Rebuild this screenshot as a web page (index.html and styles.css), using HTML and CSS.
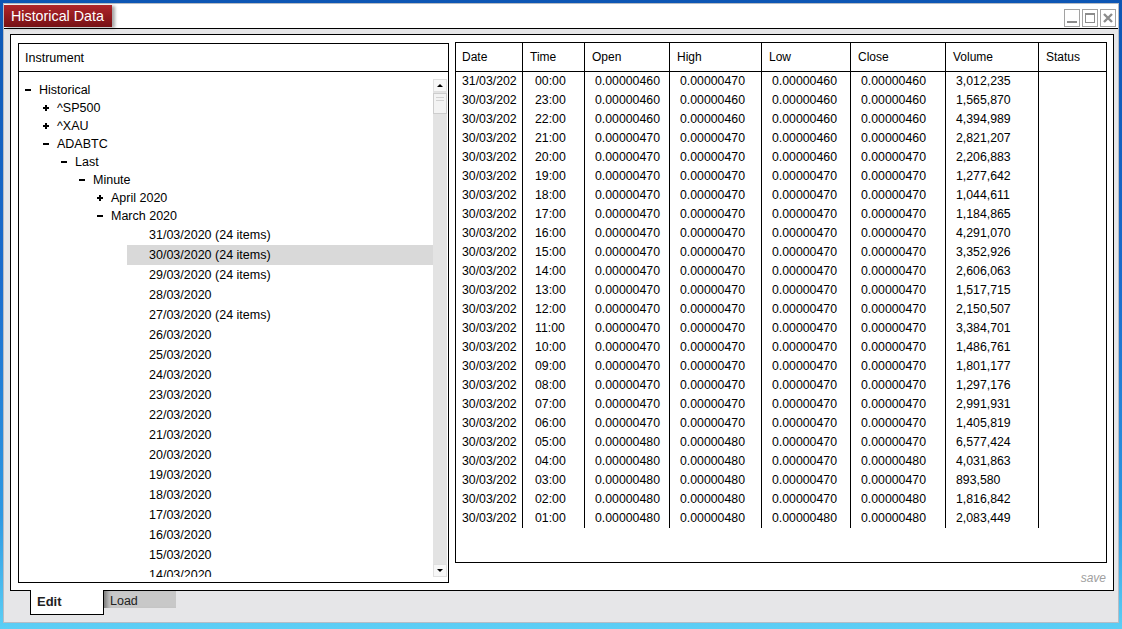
FILE: index.html
```html
<!DOCTYPE html>
<html lang="en">
<head>
    <meta charset="UTF-8">
    <title>Historical Data</title>
    <link rel="stylesheet" href="styles.css">
</head>
<body>
<div class="window">
    <div class="titlebar">
        <div class="title-tab">Historical Data</div>
        <div class="win-buttons">
            <span class="win-btn"><svg width="14" height="16" viewBox="0 0 14 16"><rect x="2" y="11" width="10" height="2" fill="#8c8c8c"/></svg></span>
            <span class="win-btn"><svg width="14" height="16" viewBox="0 0 14 16"><rect x="2.5" y="3.5" width="9" height="9" fill="none" stroke="#8c8c8c"/><rect x="2" y="3" width="10" height="2" fill="#8c8c8c"/></svg></span>
            <span class="win-btn"><svg width="14" height="16" viewBox="0 0 14 16"><path d="M3 4 L11 12 M11 4 L3 12" stroke="#8c8c8c" stroke-width="2.4"/></svg></span>
        </div>
    </div>
    <div class="window-body">
        <div class="panel">
            <div class="instrument">
                <div class="instrument-head">Instrument</div>
                <div class="instrument-body">
                    <div class="tree-view">
                        <ul class="tree">
                            <li><div class="node"><i class="toggle minus"></i>Historical</div>
                                <ul>
                                    <li><div class="node"><i class="toggle plus"></i>^SP500</div></li>
                                    <li><div class="node"><i class="toggle plus"></i>^XAU</div></li>
                                    <li><div class="node"><i class="toggle minus"></i>ADABTC</div>
                                        <ul>
                                            <li><div class="node"><i class="toggle minus"></i>Last</div>
                                                <ul>
                                                    <li><div class="node"><i class="toggle minus"></i>Minute</div>
                                                        <ul>
                                                            <li><div class="node"><i class="toggle plus"></i>April 2020</div></li>
                                                            <li><div class="node"><i class="toggle minus"></i>March 2020</div>
                                                                <ul class="days">
                                                                    <li class="leaf">31/03/2020 (24 items)</li>
                                                                    <li class="leaf selected">30/03/2020 (24 items)</li>
                                                                    <li class="leaf">29/03/2020 (24 items)</li>
                                                                    <li class="leaf">28/03/2020</li>
                                                                    <li class="leaf">27/03/2020 (24 items)</li>
                                                                    <li class="leaf">26/03/2020</li>
                                                                    <li class="leaf">25/03/2020</li>
                                                                    <li class="leaf">24/03/2020</li>
                                                                    <li class="leaf">23/03/2020</li>
                                                                    <li class="leaf">22/03/2020</li>
                                                                    <li class="leaf">21/03/2020</li>
                                                                    <li class="leaf">20/03/2020</li>
                                                                    <li class="leaf">19/03/2020</li>
                                                                    <li class="leaf">18/03/2020</li>
                                                                    <li class="leaf">17/03/2020</li>
                                                                    <li class="leaf">16/03/2020</li>
                                                                    <li class="leaf">15/03/2020</li>
                                                                    <li class="leaf">14/03/2020</li>
                                                                </ul>
                                                            </li>
                                                        </ul>
                                                    </li>
                                                </ul>
                                            </li>
                                        </ul>
                                    </li>
                                </ul>
                            </li>
                        </ul>
                    </div>
                    <div class="scrollbar">
                        <div class="sb-btn sb-up"></div>
                        <div class="sb-thumb"></div>
                        <div class="sb-track"></div>
                        <div class="sb-btn sb-down"></div>
                    </div>
                </div>
            </div>
            <div class="data-side">
                <div class="data-table">
                    <div class="grid">
                        <div class="tr"><div class="th">Date</div><div class="th">Time</div><div class="th">Open</div><div class="th">High</div><div class="th">Low</div><div class="th">Close</div><div class="th">Volume</div><div class="th">Status</div></div>
                        <div class="tr"><div class="td">31/03/2020</div><div class="td time">00:00</div><div class="td">0.00000460</div><div class="td">0.00000470</div><div class="td">0.00000460</div><div class="td">0.00000460</div><div class="td">3,012,235</div><div class="td"></div></div>
                        <div class="tr"><div class="td">30/03/2020</div><div class="td time">23:00</div><div class="td">0.00000460</div><div class="td">0.00000460</div><div class="td">0.00000460</div><div class="td">0.00000460</div><div class="td">1,565,870</div><div class="td"></div></div>
                        <div class="tr"><div class="td">30/03/2020</div><div class="td time">22:00</div><div class="td">0.00000460</div><div class="td">0.00000460</div><div class="td">0.00000460</div><div class="td">0.00000460</div><div class="td">4,394,989</div><div class="td"></div></div>
                        <div class="tr"><div class="td">30/03/2020</div><div class="td time">21:00</div><div class="td">0.00000470</div><div class="td">0.00000470</div><div class="td">0.00000460</div><div class="td">0.00000460</div><div class="td">2,821,207</div><div class="td"></div></div>
                        <div class="tr"><div class="td">30/03/2020</div><div class="td time">20:00</div><div class="td">0.00000470</div><div class="td">0.00000470</div><div class="td">0.00000460</div><div class="td">0.00000470</div><div class="td">2,206,883</div><div class="td"></div></div>
                        <div class="tr"><div class="td">30/03/2020</div><div class="td time">19:00</div><div class="td">0.00000470</div><div class="td">0.00000470</div><div class="td">0.00000470</div><div class="td">0.00000470</div><div class="td">1,277,642</div><div class="td"></div></div>
                        <div class="tr"><div class="td">30/03/2020</div><div class="td time">18:00</div><div class="td">0.00000470</div><div class="td">0.00000470</div><div class="td">0.00000470</div><div class="td">0.00000470</div><div class="td">1,044,611</div><div class="td"></div></div>
                        <div class="tr"><div class="td">30/03/2020</div><div class="td time">17:00</div><div class="td">0.00000470</div><div class="td">0.00000470</div><div class="td">0.00000470</div><div class="td">0.00000470</div><div class="td">1,184,865</div><div class="td"></div></div>
                        <div class="tr"><div class="td">30/03/2020</div><div class="td time">16:00</div><div class="td">0.00000470</div><div class="td">0.00000470</div><div class="td">0.00000470</div><div class="td">0.00000470</div><div class="td">4,291,070</div><div class="td"></div></div>
                        <div class="tr"><div class="td">30/03/2020</div><div class="td time">15:00</div><div class="td">0.00000470</div><div class="td">0.00000470</div><div class="td">0.00000470</div><div class="td">0.00000470</div><div class="td">3,352,926</div><div class="td"></div></div>
                        <div class="tr"><div class="td">30/03/2020</div><div class="td time">14:00</div><div class="td">0.00000470</div><div class="td">0.00000470</div><div class="td">0.00000470</div><div class="td">0.00000470</div><div class="td">2,606,063</div><div class="td"></div></div>
                        <div class="tr"><div class="td">30/03/2020</div><div class="td time">13:00</div><div class="td">0.00000470</div><div class="td">0.00000470</div><div class="td">0.00000470</div><div class="td">0.00000470</div><div class="td">1,517,715</div><div class="td"></div></div>
                        <div class="tr"><div class="td">30/03/2020</div><div class="td time">12:00</div><div class="td">0.00000470</div><div class="td">0.00000470</div><div class="td">0.00000470</div><div class="td">0.00000470</div><div class="td">2,150,507</div><div class="td"></div></div>
                        <div class="tr"><div class="td">30/03/2020</div><div class="td time">11:00</div><div class="td">0.00000470</div><div class="td">0.00000470</div><div class="td">0.00000470</div><div class="td">0.00000470</div><div class="td">3,384,701</div><div class="td"></div></div>
                        <div class="tr"><div class="td">30/03/2020</div><div class="td time">10:00</div><div class="td">0.00000470</div><div class="td">0.00000470</div><div class="td">0.00000470</div><div class="td">0.00000470</div><div class="td">1,486,761</div><div class="td"></div></div>
                        <div class="tr"><div class="td">30/03/2020</div><div class="td time">09:00</div><div class="td">0.00000470</div><div class="td">0.00000470</div><div class="td">0.00000470</div><div class="td">0.00000470</div><div class="td">1,801,177</div><div class="td"></div></div>
                        <div class="tr"><div class="td">30/03/2020</div><div class="td time">08:00</div><div class="td">0.00000470</div><div class="td">0.00000470</div><div class="td">0.00000470</div><div class="td">0.00000470</div><div class="td">1,297,176</div><div class="td"></div></div>
                        <div class="tr"><div class="td">30/03/2020</div><div class="td time">07:00</div><div class="td">0.00000470</div><div class="td">0.00000470</div><div class="td">0.00000470</div><div class="td">0.00000470</div><div class="td">2,991,931</div><div class="td"></div></div>
                        <div class="tr"><div class="td">30/03/2020</div><div class="td time">06:00</div><div class="td">0.00000470</div><div class="td">0.00000470</div><div class="td">0.00000470</div><div class="td">0.00000470</div><div class="td">1,405,819</div><div class="td"></div></div>
                        <div class="tr"><div class="td">30/03/2020</div><div class="td time">05:00</div><div class="td">0.00000480</div><div class="td">0.00000480</div><div class="td">0.00000470</div><div class="td">0.00000470</div><div class="td">6,577,424</div><div class="td"></div></div>
                        <div class="tr"><div class="td">30/03/2020</div><div class="td time">04:00</div><div class="td">0.00000480</div><div class="td">0.00000480</div><div class="td">0.00000470</div><div class="td">0.00000480</div><div class="td">4,031,863</div><div class="td"></div></div>
                        <div class="tr"><div class="td">30/03/2020</div><div class="td time">03:00</div><div class="td">0.00000480</div><div class="td">0.00000480</div><div class="td">0.00000470</div><div class="td">0.00000470</div><div class="td">893,580</div><div class="td"></div></div>
                        <div class="tr"><div class="td">30/03/2020</div><div class="td time">02:00</div><div class="td">0.00000480</div><div class="td">0.00000480</div><div class="td">0.00000470</div><div class="td">0.00000480</div><div class="td">1,816,842</div><div class="td"></div></div>
                        <div class="tr"><div class="td">30/03/2020</div><div class="td time">01:00</div><div class="td">0.00000480</div><div class="td">0.00000480</div><div class="td">0.00000480</div><div class="td">0.00000480</div><div class="td">2,083,449</div><div class="td"></div></div>
                    </div>
                </div>
                <div class="save-row"><span class="save">save</span></div>
            </div>
        </div>
        <div class="tabs">
            <a class="tab tab-active" href="#">Edit</a>
            <a class="tab tab-load" href="#">Load</a>
        </div>
    </div>
</div>
</body>
</html>
```

FILE: styles.css
```css
html,body{
    margin: 0;
    padding: 0;
}
body{
    height: 629px;
    box-sizing: border-box;
    padding-top: 3px;
    overflow: hidden;
    font-family: "Liberation Sans", Arial, sans-serif;
    color: #000;
    background: linear-gradient(180deg, #0d56b4 0%, #1b6dcd 45%, #2e98e2 82%, #5ccff5 100%);
}
ul,li{
    list-style: none;
    margin: 0;
    padding: 0;
}

/* window frame */
.window{
    margin-left: 3px;
    width: 1116px;
    height: 620px;
    box-sizing: border-box;
    border: 1px solid #b7bcc4;
    background: #e6e6e8;
}
.titlebar{
    height: 24px;
    background: #fff;
    border-bottom: 1px solid #000;
    display: flex;
    align-items: flex-start;
    justify-content: space-between;
}
.title-tab{
    margin-top: 1px;
    height: 22px;
    line-height: 23px;
    padding: 0 8px 0 7px;
    font-size: 14.3px;
    color: #fff;
    background: linear-gradient(180deg, #b0262b 0%, #931a1f 50%, #761115 100%);
    box-shadow: 3px 1px 3px rgba(0,0,0,.35);
}
.win-buttons{
    display: flex;
    gap: 2px;
    margin: 5px 2px 0 0;
}
.win-btn{
    width: 16px;
    height: 18px;
    box-sizing: border-box;
    border: 1px solid #a2a2a2;
    background: #fff;
    display: flex;
    align-items: center;
    justify-content: center;
}

.window-body{
    padding: 5px 4px 0 6px;
}
.panel{
    height: 557px;
    box-sizing: border-box;
    border: 1px solid #000;
    background: #fff;
    display: flex;
    gap: 6px;
    padding: 7px 6px 0 7px;
}

/* instrument tree */
.instrument{
    width: 431px;
    height: 540px;
    margin-top: 1px;
    box-sizing: border-box;
    border: 1px solid #000;
    display: flex;
    flex-direction: column;
}
.instrument-head{
    height: 27px;
    line-height: 29px;
    padding-left: 6px;
    font-size: 12.5px;
    border-bottom: 1px solid #000;
}
.instrument-body{
    flex: 1;
    display: flex;
    min-height: 0;
}
.tree-view{
    flex: 1;
    height: 505px;
    overflow: hidden;
}
.tree{
    padding: 9px 0 0 6px;
    font-size: 12.5px;
}
.tree ul{
    padding-left: 18px;
}
.tree ul.days{
    padding-left: 0;
    margin-left: 30px;
}
.node{
    height: 18px;
    line-height: 18px;
    display: flex;
    align-items: center;
    white-space: nowrap;
}
.toggle{
    width: 14px;
    height: 18px;
    flex: none;
    position: relative;
}
.toggle:before{
    content: "";
    position: absolute;
    left: 0;
    top: 8px;
    width: 6px;
    height: 2px;
    background: #000;
}
.toggle.plus:after{
    content: "";
    position: absolute;
    left: 2px;
    top: 6px;
    width: 2px;
    height: 6px;
    background: #000;
}
.leaf{
    height: 20px;
    line-height: 20px;
    padding-left: 22px;
    white-space: nowrap;
}
.leaf.selected{
    background: #d9d9d9;
}

/* scrollbar */
.scrollbar{
    width: 14px;
    height: 498px;
    margin: 7px 1px 0 0;
    background: #e3e3e3;
    display: flex;
    flex-direction: column;
}
.sb-btn{
    height: 11px;
    background: #f7f7f7;
    border: 1px solid #e0e0e0;
    position: relative;
}
.sb-btn:before{
    content: "";
    position: absolute;
    left: 3px;
    border-left: 3px solid transparent;
    border-right: 3px solid transparent;
}
.sb-up:before{
    top: 4px;
    border-bottom: 3px solid #000;
}
.sb-down:before{
    top: 4px;
    border-top: 3px solid #000;
}
.sb-thumb{
    height: 19px;
    margin-top: 1px;
    background: #f3f3f3;
    border: 1px solid #cdcdcd;
    position: relative;
}
.sb-thumb:before{
    content: "";
    position: absolute;
    left: 2px;
    right: 2px;
    top: 3px;
    height: 2px;
    border-top: 1px solid #d2d2d2;
    border-bottom: 1px solid #d2d2d2;
}
.sb-track{
    flex: 1;
}

/* data table */
.data-side{
    width: 652px;
    display: flex;
    flex-direction: column;
}
.data-table{
    height: 521px;
    box-sizing: border-box;
    border: 1px solid #000;
}
.grid{
    display: grid;
    grid-template-columns: 66px 62px 85px 92px 89px 95px 93px 1fr;
    grid-template-rows: 29px;
    grid-auto-rows: 19px;
    font-size: 12px;
}
.tr{
    display: contents;
}
.th,.td{
    border-left: 1px solid #000;
    white-space: nowrap;
    overflow: hidden;
}
.th{
    line-height: 28px;
    padding-left: 7px;
    border-bottom: 1px solid #000;
}
.td{
    line-height: 18px;
    padding-left: 10px;
    font-size: 12.3px;
}
.td.time{
    padding-left: 12px;
}
.tr > :first-child{
    border-left: none;
    padding-left: 6px;
}
.tr > .td:first-child{
    clip-path: inset(0 5px 0 0);
}
.save-row{
    height: 27px;
    line-height: 27px;
    text-align: right;
    padding-right: 1px;
}
.save{
    font-size: 12px;
    font-style: italic;
    color: #a0a0a0;
}

/* bottom tabs */
.tabs{
    display: flex;
    padding-left: 20px;
}
.tab{
    display: block;
    box-sizing: border-box;
    padding-left: 6px;
    text-decoration: none;
    color: #222;
}
.tab-active{
    width: 74px;
    height: 25px;
    margin-top: -1px;
    line-height: 23px;
    font-size: 13px;
    font-weight: bold;
    background: #fff;
    border: 1px solid #000;
    border-top: none;
}
.tab-load{
    width: 72px;
    height: 17px;
    line-height: 21px;
    font-size: 12.5px;
    background: #c8c8c8;
    box-shadow: inset 7px 0 5px -4px rgba(0,0,0,.4);
}
```
